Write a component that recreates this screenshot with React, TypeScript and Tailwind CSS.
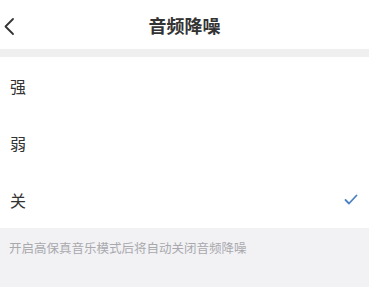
import React from "react";

const font = { fontFamily: '"Noto Sans CJK SC", "Noto Sans", sans-serif' };

export default function App() {
  const items = ["强", "弱", "关"];
  return (
    <div className="w-[369px] h-[287px] bg-[#f4f4f6] flex flex-col overflow-hidden" style={font}>
      <div className="h-[49px] bg-white flex items-center relative shrink-0">
        <svg className="absolute left-[3px] top-[17px]" width="12" height="19" viewBox="0 0 12 19" fill="none">
          <path d="M10 2 L2.5 9.5 L10 17" stroke="#333" strokeWidth="1.8" strokeLinecap="round" strokeLinejoin="round" />
        </svg>
        <div className="flex-1 text-center text-[18px] font-bold text-[#333] leading-none">音频降噪</div>
      </div>
      <div className="h-[8px] bg-[#efefef] shrink-0" />
      <div className="bg-white flex flex-col shrink-0">
        {items.map((t, i) => (
          <div key={t} className="h-[57px] flex items-center justify-between pl-[10px] pr-[11px]">
            <span className="text-[16px] text-[#333] leading-none">{t}</span>
            {i === 2 && (
              <svg width="14" height="11" viewBox="0 0 14 11" fill="none">
                <path d="M1.5 6 L5 9.5 L12.5 1.5" stroke="#4b82c4" strokeWidth="1.8" strokeLinecap="round" strokeLinejoin="round" />
              </svg>
            )}
          </div>
        ))}
      </div>
      <div className="flex-1 bg-[#f2f2f5] pl-[9px] pt-[14px]">
        <div className="text-[12.5px] text-[#a9a9ad] leading-none">开启高保真音乐模式后将自动关闭音频降噪</div>
      </div>
    </div>
  );
}
